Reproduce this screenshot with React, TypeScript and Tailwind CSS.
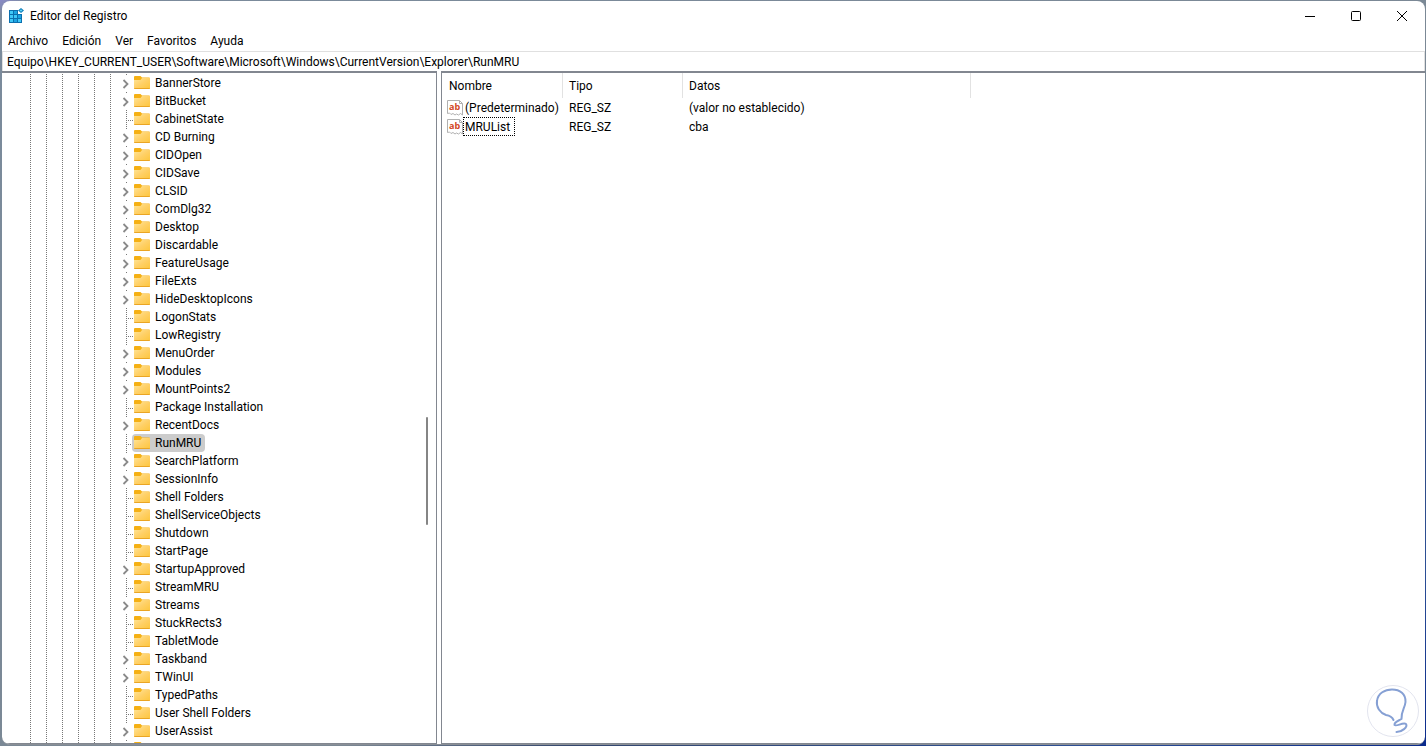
import { useState } from "react";

type TreeKey = { name: string; expandable?: boolean };

const KEYS: TreeKey[] = [
  { name: "BannerStore", expandable: true },
  { name: "BitBucket", expandable: true },
  { name: "CabinetState" },
  { name: "CD Burning", expandable: true },
  { name: "CIDOpen", expandable: true },
  { name: "CIDSave", expandable: true },
  { name: "CLSID", expandable: true },
  { name: "ComDlg32", expandable: true },
  { name: "Desktop", expandable: true },
  { name: "Discardable", expandable: true },
  { name: "FeatureUsage", expandable: true },
  { name: "FileExts", expandable: true },
  { name: "HideDesktopIcons", expandable: true },
  { name: "LogonStats" },
  { name: "LowRegistry" },
  { name: "MenuOrder", expandable: true },
  { name: "Modules", expandable: true },
  { name: "MountPoints2", expandable: true },
  { name: "Package Installation" },
  { name: "RecentDocs", expandable: true },
  { name: "RunMRU" },
  { name: "SearchPlatform", expandable: true },
  { name: "SessionInfo", expandable: true },
  { name: "Shell Folders" },
  { name: "ShellServiceObjects" },
  { name: "Shutdown" },
  { name: "StartPage" },
  { name: "StartupApproved", expandable: true },
  { name: "StreamMRU" },
  { name: "Streams", expandable: true },
  { name: "StuckRects3" },
  { name: "TabletMode" },
  { name: "Taskband", expandable: true },
  { name: "TWinUI", expandable: true },
  { name: "TypedPaths" },
  { name: "User Shell Folders" },
  { name: "UserAssist", expandable: true },
];

const VALUES = [
  { name: "(Predeterminado)", type: "REG_SZ", data: "(valor no establecido)" },
  { name: "MRUList", type: "REG_SZ", data: "cba" },
];

const MENUS = ["Archivo", "Edición", "Ver", "Favoritos", "Ayuda"];

function RegistryIcon() {
  return (
    <svg width="16" height="16" viewBox="0 0 16 16" aria-hidden="true">
      <path d="M1 2h9v4h4v9H1z" fill="#0b6fae" />
      <path d="M2 3h3v3H2zM2 7h3v3H2zM6 7h3v3H6zM2 11h3v3H2zM10 11h3v3h-3z" fill="#3fc8f7" />
      <path d="M6 3h3v3H6zM10 7h3v3h-3zM6 11h3v3H6z" fill="#1ba3e2" />
      <path d="M13 0l3 2.500-3 2.500-3-2.500z" fill="#0d7cb8" />
      <path d="M13 1.300l1.500 1.200L13 3.700l-1.500-1.200z" fill="#5bd0f5" />
    </svg>
  );
}

function FolderIcon() {
  return (
    <svg width="16" height="14" viewBox="0 0 16 14" className="shrink-0" aria-hidden="true">
      <defs>
        <linearGradient id="folder" x1="0" y1="0" x2="1" y2="1">
          <stop offset="0" stopColor="#ffe69a" />
          <stop offset="0.500" stopColor="#ffd067" />
          <stop offset="1" stopColor="#fdc63c" />
        </linearGradient>
      </defs>
      <path d="M0 1q0-1 1-1h5.500L8 1.500h7q1 0 1 1V5H0z" fill="#f5b014" />
      <path d="M0 4h6.500L8 2h8v10q0 1-1 1H1q-1 0-1-1z" fill="url(#folder)" />
      <path d="M0 12h16q0 1-1 1H1q-1 0-1-1z" fill="#eaa524" />
    </svg>
  );
}

function StringIcon() {
  return (
    <svg width="16" height="16" viewBox="0 0 16 16" className="shrink-0" aria-hidden="true">
      <path
        d="M.5.5h12l3 3v11.500l-2-1.500-2 1.500-2-1-1.500 1-2-1.500-2 1-1.500-1.500-2 .5z"
        fill="#fff"
        stroke="#b0b0b0"
      />
      <path d="M12.500.5v3h3" fill="none" stroke="#b0b0b0" />
      <text x="2" y="10" fontSize="9" fontWeight="700" fill="#d24726" fontFamily="Open Sans, sans-serif">
        ab
      </text>
    </svg>
  );
}

function Guide() {
  return (
    <span className="h-full w-px mr-[15px] shrink-0 bg-[linear-gradient(#777_50%,transparent_50%)] bg-[length:1px_2px]" />
  );
}

function TreeRow({
  item,
  selected,
  onSelect,
}: {
  item: TreeKey;
  selected?: boolean;
  onSelect?: () => void;
}) {
  return (
    <li className="flex h-[18px] items-center pl-7">
      {[0, 1, 2, 3, 4, 5].map((level) => (
        <Guide key={level} />
      ))}
      {item.expandable ? (
        <button
          type="button"
          aria-label={`Expandir ${item.name}`}
          className="-ml-1 h-full w-[10px] shrink-0"
        >
          <svg width="10" height="18" viewBox="0 0 10 18" fill="none" aria-hidden="true">
            <path d="M4 .5h1" stroke="#777" />
            <path d="M1.500 6l4 4-4 4" stroke="#8a8a8a" strokeWidth="1.800" />
          </svg>
        </button>
      ) : (
        <span className="flex h-full w-[6px] shrink-0 items-center">
          <span className="h-full w-px shrink-0 bg-[linear-gradient(#777_50%,transparent_50%)] bg-[length:1px_2px]" />
          <span className="mt-[3px] ml-px h-px w-[5px] shrink-0 bg-[linear-gradient(90deg,#777_50%,transparent_50%)] bg-[length:2px_1px]" />
        </span>
      )}
      <button
        type="button"
        onClick={onSelect}
        className={`flex h-[18px] items-center gap-[5px] rounded-sm pr-1 pl-[2px] whitespace-nowrap ${
          selected ? "bg-[#cccccc]" : ""
        }`}
      >
        <FolderIcon />
        {item.name}
      </button>
    </li>
  );
}

function Bulb() {
  return (
    <svg
      width="52"
      height="52"
      viewBox="0 0 52 52"
      fill="none"
      className="absolute right-[6px] bottom-[7px]"
      aria-hidden="true"
    >
      <circle cx="26" cy="26" r="25.500" stroke="#e2e4ee" />
      <path
        d="M26.500 35C25 31.500 22 30.500 19 30C13 28 9 22 10 16C11 8 18 4.500 25 4.500C33 4.500 39 9 38.500 17C38 23 34 26 34.500 34C31 36 27 37 27.500 40C29 42 36 37 39 39C41 42 35 47 29.500 47"
        stroke="#86a0d4"
        strokeWidth="2"
        strokeLinecap="round"
        strokeLinejoin="round"
      />
    </svg>
  );
}

export default function App() {
  const [selected, setSelected] = useState("RunMRU");
  const [path, setPath] = useState(
    "Equipo\\HKEY_CURRENT_USER\\Software\\Microsoft\\Windows\\CurrentVersion\\Explorer\\RunMRU",
  );

  return (
    <div className="h-screen overflow-hidden bg-[linear-gradient(to_bottom_right,#8a8ac8,#7b8b9c_1%,#7b8894_62%,#34476e_70%,#2c4f96_88%,#0a2a8c)] pt-px pr-px pb-px pl-[2px] font-[Roboto,'Open_Sans',sans-serif] text-xs text-black">
      <div className="relative flex h-full flex-col overflow-hidden rounded-lg border-b border-[#8a8f96] bg-white">
        <header className="flex h-[30px] shrink-0 items-center pl-[6px]">
          <RegistryIcon />
          <h1 className="ml-[6px]">Editor del Registro</h1>
          <div className="ml-auto flex h-full">
            <button type="button" aria-label="Minimizar" className="flex w-[46px] items-center justify-center">
              <svg width="10" height="10" viewBox="0 0 10 10" stroke="#000">
                <path d="M0 5.500h10" />
              </svg>
            </button>
            <button type="button" aria-label="Maximizar" className="flex w-[46px] items-center justify-center">
              <svg width="10" height="10" viewBox="0 0 10 10" stroke="#000" fill="none">
                <rect x=".5" y=".5" width="9" height="9" rx="1" />
              </svg>
            </button>
            <button type="button" aria-label="Cerrar" className="flex w-[46px] items-center justify-center">
              <svg width="10" height="10" viewBox="0 0 10 10" stroke="#000">
                <path d="M0 0l10 10M10 0L0 10" />
              </svg>
            </button>
          </div>
        </header>

        <nav className="flex h-5 shrink-0 items-center gap-[14px] pl-[6px]">
          {MENUS.map((menu) => (
            <button key={menu} type="button">
              {menu}
            </button>
          ))}
        </nav>

        <input
          aria-label="Ruta de la clave"
          value={path}
          onChange={(e) => setPath(e.target.value)}
          className="h-5 shrink-0 border border-b-0 border-[#e0e0e0] pl-1 focus:outline-none"
        />

        <main className="flex min-h-0 flex-1">
          <section className="relative w-[435px] shrink-0 overflow-hidden border-t-2 border-r border-b border-[#828790] pt-px">
            <ul>
              {KEYS.map((item) => (
                <TreeRow
                  key={item.name}
                  item={item}
                  selected={item.name === selected}
                  onSelect={() => setSelected(item.name)}
                />
              ))}
              <TreeRow item={{ name: "", expandable: true }} />
            </ul>
            <span className="absolute top-[344px] right-2 h-[108px] w-[2px] rounded-full bg-[#858585]" />
          </section>

          <section className="ml-1 min-w-0 flex-1 overflow-hidden border-t-2 border-b border-l border-[#828790]">
            <table className="w-[529px] table-fixed border-separate border-spacing-0 text-left">
              <thead>
                <tr className="h-[25px]">
                  <th className="w-[121px] border-r border-[#e2e2e2] pl-[7px] font-normal">Nombre</th>
                  <th className="w-[120px] border-r border-[#e2e2e2] pl-[6px] font-normal">Tipo</th>
                  <th className="border-r border-[#e2e2e2] pl-[6px] font-normal">Datos</th>
                </tr>
              </thead>
              <tbody>
                {VALUES.map((value, i) => (
                  <tr key={value.name} className="h-[19px]">
                    <td className="p-0 pl-[5px]">
                      <div className="flex h-[19px] items-center whitespace-nowrap">
                        <StringIcon />
                        <span
                          className={
                            i === 1
                              ? "flex h-[19px] items-center border border-dotted border-black pr-1 pl-px"
                              : "pl-[2px]"
                          }
                        >
                          {value.name}
                        </span>
                      </div>
                    </td>
                    <td className="p-0 pl-[6px]">{value.type}</td>
                    <td className="p-0 pl-[6px]">{value.data}</td>
                  </tr>
                ))}
              </tbody>
            </table>
          </section>
        </main>
        <Bulb />
      </div>
    </div>
  );
}
